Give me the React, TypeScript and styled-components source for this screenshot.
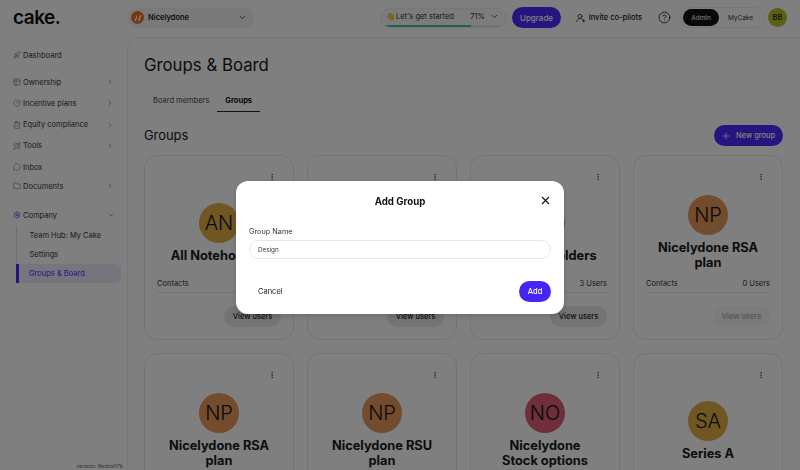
import styled, { createGlobalStyle } from "styled-components";
import {
  Rocket,
  Table2,
  ChartPie,
  ClipboardList,
  PencilRuler,
  MessageCircle,
  Folder,
  Settings,
  ChevronRight,
  ChevronDown,
  EllipsisVertical,
  Plus,
  X,
  UserRoundPlus,
  CircleHelp,
} from "lucide-react";

const navTop = [
  { label: "Ownership", icon: Table2 },
  { label: "Incentive plans", icon: ChartPie },
  { label: "Equity compliance", icon: ClipboardList },
  { label: "Tools", icon: PencilRuler },
];

const groups = [
  { initials: "AN", color: "#e0ae44", name: "All Noteholders", users: 3 },
  { initials: "AN", color: "#e0ae44", name: "All Optionholders", users: 3 },
  { initials: "AS", color: "#e6985a", name: "All Shareholders", users: 3 },
  { initials: "NP", color: "#e6985a", name: "Nicelydone RSA plan", users: 0 },
  { initials: "NP", color: "#e6985a", name: "Nicelydone RSA plan", users: 0 },
  { initials: "NP", color: "#e6985a", name: "Nicelydone RSU plan", users: 0 },
  { initials: "NO", color: "#dc5c76", name: "Nicelydone Stock options", users: 0 },
  { initials: "SA", color: "#e0ae44", name: "Series A", users: 0 },
];

const App = () => {
  return (
    <Page>
      <GlobalStyle />
      <Header>
        <Logo>cake.</Logo>
        <OrgSelect>
          <OrgBadge>
            <svg width="10" height="10" viewBox="0 0 10 10">
              <path d="M1.5 8 L3.5 2.5 L4.5 2.5 L3 8 Z M5 8 L7 2 L8.5 2 L6.5 8 Z" fill="#fff" />
            </svg>
          </OrgBadge>
          <OrgName>Nicelydone</OrgName>
          <ChevronDown size={9} strokeWidth={2} color="#222" />
        </OrgSelect>
        <Progress>
          <Wave>👋</Wave>
          <ProgressLabel>Let's get started</ProgressLabel>
          <ProgressValue>71%</ProgressValue>
          <ChevronDown size={9} strokeWidth={2} color="#222" />
          <ProgressTrack>
            <ProgressFill />
          </ProgressTrack>
        </Progress>
        <Upgrade>Upgrade</Upgrade>
        <Invite>
          <UserRoundPlus size={10} strokeWidth={1.8} />
          Invite co-pilots
        </Invite>
        <HelpSlot>
          <CircleHelp size={13} strokeWidth={1.5} />
        </HelpSlot>
        <Switcher>
          <SwitchOption $active>Admin</SwitchOption>
          <SwitchOption>MyCake</SwitchOption>
        </Switcher>
        <UserAvatar>BB</UserAvatar>
      </Header>
      <Body>
        <Sidebar>
          <NavItem>
            <Rocket size={8} strokeWidth={1.5} />
            <NavLabel>Dashboard</NavLabel>
          </NavItem>
          <NavGroup>
            {navTop.map((item) => (
              <NavItem key={item.label}>
                <item.icon size={8} strokeWidth={1.5} />
                <NavLabel>{item.label}</NavLabel>
                <ChevronRight size={8} strokeWidth={1.6} />
              </NavItem>
            ))}
            <NavItem>
              <MessageCircle size={8} strokeWidth={1.5} />
              <NavLabel>Inbox</NavLabel>
            </NavItem>
            <DocumentsItem>
              <Folder size={8} strokeWidth={1.5} />
              <NavLabel>Documents</NavLabel>
              <ChevronRight size={8} strokeWidth={1.6} />
            </DocumentsItem>
          </NavGroup>
          <CompanyItem>
            <Settings size={8} strokeWidth={1.8} color="#4a2be0" />
            <NavLabel>Company</NavLabel>
            <ChevronDown size={8} strokeWidth={1.6} />
          </CompanyItem>
          <SubNav>
            <SubItem>Team Hub: My Cake</SubItem>
            <SubItem>Settings</SubItem>
            <SubItem $active>Groups &amp; Board</SubItem>
          </SubNav>
          <Version>version: 9edce07b</Version>
        </Sidebar>
        <Main>
          <Title>Groups &amp; Board</Title>
          <Tabs>
            <Tab>Board members</Tab>
            <Tab $active>Groups</Tab>
          </Tabs>
          <SectionHead>
            <SectionTitle>Groups</SectionTitle>
            <NewGroup>
              <Plus size={10} strokeWidth={1.8} />
              New group
            </NewGroup>
          </SectionHead>
          <CardGrid>
            {groups.map((group, i) => (
              <Card key={i}>
                <CardMenu>
                  <EllipsisVertical size={8} strokeWidth={2} />
                </CardMenu>
                <CardBody>
                  <Avatar $color={group.color}>{group.initials}</Avatar>
                  <CardName>{group.name}</CardName>
                </CardBody>
                <CardRow>
                  <span>Contacts</span>
                  <span>{group.users} Users</span>
                </CardRow>
                <ViewUsers $muted={group.users === 0}>View users</ViewUsers>
              </Card>
            ))}
          </CardGrid>
        </Main>
      </Body>
      <Overlay>
        <Modal>
          <ModalHead>
            <ModalTitle>Add Group</ModalTitle>
            <CloseButton>
              <X size={13} strokeWidth={2} />
            </CloseButton>
          </ModalHead>
          <FieldLabel>Group Name</FieldLabel>
          <FieldInput>Design</FieldInput>
          <ModalFoot>
            <CancelButton>Cancel</CancelButton>
            <AddButton>Add</AddButton>
          </ModalFoot>
        </Modal>
      </Overlay>
    </Page>
  );
};

const GlobalStyle = createGlobalStyle`
  html, body {
    margin: 0;
    padding: 0;
    background: #fff;
    font-family: Inter, "Liberation Sans", sans-serif;
    overflow: hidden;
  }
  * {
    box-sizing: border-box;
  }
`;

const Page = styled.div`
  width: 800px;
  height: 470px;
  overflow: hidden;
  display: flex;
  flex-direction: column;
  background: #fff;
  color: #1a1a1a;
`;

const Header = styled.header`
  height: 37px;
  flex: none;
  display: flex;
  align-items: center;
  padding: 0 0 2px 13px;
  white-space: nowrap;
  > * {
    flex-shrink: 0;
  }
`;

const Logo = styled.div`
  width: 114px;
  font-size: 19px;
  font-weight: 600;
  letter-spacing: -0.5px;
  color: #111;
`;

const OrgSelect = styled.div`
  width: 127px;
  height: 20px;
  border-radius: 10px;
  background: #f3f3f3;
  display: flex;
  align-items: center;
  padding: 0 7px 0 4px;
`;

const OrgBadge = styled.div`
  width: 13px;
  height: 13px;
  border-radius: 50%;
  background: #f26a1b;
  display: flex;
  align-items: center;
  justify-content: center;
`;

const OrgName = styled.span`
  flex: 1;
  margin-left: 4px;
  font-size: 7.5px;
  font-weight: 600;
`;

const Progress = styled.div`
  position: relative;
  width: 127px;
  height: 20px;
  margin-left: 126px;
  border: 1px solid #eee;
  border-radius: 10px;
  background: #f8f8f8;
  display: flex;
  align-items: center;
  padding: 0 7px 2px 5px;
  font-size: 7.5px;
  overflow: hidden;
`;

const Wave = styled.span`
  font-size: 7.5px;
`;

const ProgressLabel = styled.span`
  flex: 1;
  margin-left: 1px;
  color: #333;
`;

const ProgressValue = styled.span`
  margin-right: 5px;
  color: #333;
`;

const ProgressTrack = styled.div`
  position: absolute;
  left: 4px;
  right: 0;
  bottom: 0;
  height: 2px;
  background: #e2e2e2;
`;

const ProgressFill = styled.div`
  width: 71%;
  height: 100%;
  background: #3ecb84;
`;

const Upgrade = styled.button`
  width: 49px;
  height: 21px;
  margin-left: 5px;
  padding: 0;
  border: 0;
  border-radius: 11px;
  background: #4f2bff;
  color: #fff;
  font: 500 8px Inter, sans-serif;
`;

const Invite = styled.div`
  display: flex;
  align-items: center;
  gap: 3px;
  width: 66px;
  margin-left: 15px;
  font-size: 7.5px;
  font-weight: 500;
`;

const HelpSlot = styled.div`
  display: flex;
  margin-left: 16px;
`;

const Switcher = styled.div`
  display: flex;
  align-items: center;
  width: 85px;
  height: 21px;
  margin-left: 9px;
  padding: 0 2px;
  border: 1px solid #eee;
  border-radius: 11px;
`;

const SwitchOption = styled.div<{ $active?: boolean }>`
  flex: ${(p) => (p.$active ? "none" : 1)};
  width: ${(p) => (p.$active ? "36px" : "auto")};
  height: 17px;
  border-radius: 9px;
  display: flex;
  align-items: center;
  justify-content: center;
  font-size: 6.5px;
  background: ${(p) => (p.$active ? "#111" : "transparent")};
  color: ${(p) => (p.$active ? "#fff" : "#333")};
`;

const UserAvatar = styled.div`
  width: 19px;
  height: 19px;
  margin-left: 3px;
  border-radius: 50%;
  background: #b5c227;
  display: flex;
  align-items: center;
  justify-content: center;
  font-size: 7.5px;
  font-weight: 500;
`;

const Body = styled.div`
  flex: 1;
  min-height: 0;
  display: flex;
`;

const Sidebar = styled.nav`
  position: relative;
  width: 127px;
  flex: none;
  padding: 11px 13px 0 13px;
  font-size: 7.5px;
  color: #333;
`;

const NavItem = styled.div`
  height: 14px;
  display: flex;
  align-items: center;
  gap: 2px;
  margin-bottom: 7.3px;
  svg {
    color: #666;
  }
`;

const NavGroup = styled.div`
  margin-top: 13px;
`;

const DocumentsItem = styled(NavItem)`
  margin-top: -2.4px;
`;

const CompanyItem = styled(NavItem)`
  margin: 15px -1px 0 0;
`;

const NavLabel = styled.span`
  flex: 1;
`;

const SubNav = styled.div`
  margin: 4px -7px 0 3px;
  border-left: 1px solid #ddd;
`;

const SubItem = styled.div<{ $active?: boolean }>`
  height: 19px;
  display: flex;
  align-items: center;
  padding-left: ${(p) => (p.$active ? "10px" : "12.5px")};
  border-radius: ${(p) => (p.$active ? "0 6px 6px 0" : "0")};
  border-left: ${(p) => (p.$active ? "3px solid #4f2bff" : "0")};
  margin-left: ${(p) => (p.$active ? "-1px" : "0")};
  background: ${(p) => (p.$active ? "#ece8fb" : "transparent")};
  color: ${(p) => (p.$active ? "#4f2bff" : "#333")};
`;

const Version = styled.div`
  position: absolute;
  right: 4px;
  bottom: 1px;
  font-size: 5.3px;
  white-space: nowrap;
  color: #666;
`;

const Main = styled.main`
  flex: 1;
  min-width: 0;
  padding: 15px 17px 0 16px;
  border-left: 1px solid #eee;
  border-top: 1px solid #eee;
  border-top-left-radius: 12px;
`;

const Title = styled.h1`
  margin: 0;
  font-size: 16.8px;
  font-weight: 400;
  line-height: 24px;
`;

const Tabs = styled.div`
  display: flex;
  margin-top: 12px;
`;

const Tab = styled.div<{ $active?: boolean }>`
  height: 23px;
  padding: 0 8px 0 ${(p) => (p.$active ? "8px" : "9px")};
  display: flex;
  align-items: center;
  font-size: 7.5px;
  font-weight: ${(p) => (p.$active ? 700 : 400)};
  color: ${(p) => (p.$active ? "#111" : "#444")};
  border-bottom: 1px solid ${(p) => (p.$active ? "#222" : "transparent")};
`;

const SectionHead = styled.div`
  display: flex;
  align-items: center;
  justify-content: space-between;
  margin-top: 11.5px;
  height: 24px;
`;

const SectionTitle = styled.h2`
  margin: 0;
  font-size: 12.9px;
  font-weight: 400;
`;

const NewGroup = styled.button`
  display: flex;
  align-items: center;
  gap: 5px;
  width: 69px;
  height: 21px;
  padding: 0 0 0 7px;
  border: 0;
  border-radius: 11px;
  background: #4f2bff;
  color: #fff;
  white-space: nowrap;
  font: 500 7.5px Inter, sans-serif;
`;

const CardGrid = styled.div`
  display: grid;
  grid-template-columns: repeat(4, 150px);
  grid-auto-rows: 185px;
  gap: 13px;
  margin-top: 7px;
`;

const Card = styled.article`
  position: relative;
  display: flex;
  flex-direction: column;
  align-items: center;
  padding: 35px 12px 0;
  border: 1px solid #e8e8e8;
  border-radius: 13px;
`;

const CardMenu = styled.div`
  position: absolute;
  top: 17px;
  right: 17px;
  display: flex;
  color: #333;
`;

const CardBody = styled.div`
  height: 84px;
  flex: none;
  display: flex;
  flex-direction: column;
  align-items: center;
  justify-content: center;
`;

const Avatar = styled.div<{ $color: string }>`
  width: 40px;
  height: 40px;
  flex: none;
  border-radius: 50%;
  background: ${(p) => p.$color};
  display: flex;
  align-items: center;
  justify-content: center;
  font-size: 20px;
  font-weight: 300;
  color: #111;
`;

const CardName = styled.div`
  max-width: 108px;
  margin-top: 5px;
  text-align: center;
  font-size: 12.8px;
  font-weight: 700;
  line-height: 15px;
`;

const CardRow = styled.div`
  width: 100%;
  height: 18px;
  flex: none;
  display: flex;
  justify-content: space-between;
  align-items: center;
  font-size: 7.5px;
  color: #333;
  border-bottom: 1px solid #e8e8e8;
`;

const ViewUsers = styled.button<{ $muted: boolean }>`
  align-self: flex-end;
  width: 57px;
  height: 21px;
  flex: none;
  margin-top: 13px;
  padding: 0;
  border: 0;
  border-radius: 11px;
  background: ${(p) => (p.$muted ? "#f6f6f6" : "#e8e8e8")};
  color: ${(p) => (p.$muted ? "#aaa" : "#222")};
  font: 500 7.5px Inter, sans-serif;
`;

const Overlay = styled.div`
  position: fixed;
  inset: 0;
  background: rgba(0, 0, 0, 0.5);
  display: flex;
  align-items: flex-start;
  justify-content: center;
  padding-top: 181px;
`;

const Modal = styled.div`
  width: 328px;
  height: 133px;
  padding: 0 13px;
  background: #fff;
  border-radius: 12px;
  box-shadow: 0 2px 6px rgba(0, 0, 0, 0.15);
`;

const ModalHead = styled.div`
  position: relative;
  height: 40px;
  display: flex;
  align-items: center;
  justify-content: center;
`;

const ModalTitle = styled.div`
  font-size: 9.7px;
  font-weight: 700;
  color: #111;
`;

const CloseButton = styled.div`
  position: absolute;
  right: -0.5px;
  top: 13px;
  display: flex;
  color: #111;
`;

const FieldLabel = styled.div`
  margin-top: 6px;
  font-size: 7.3px;
  line-height: 10px;
  color: #333;
`;

const FieldInput = styled.div`
  height: 19px;
  margin-top: 3px;
  padding: 0 8px;
  display: flex;
  align-items: center;
  font-size: 6.3px;
  color: #333;
  border: 1px solid #e6e6e6;
  border-radius: 9px;
`;

const ModalFoot = styled.div`
  display: flex;
  justify-content: space-between;
  align-items: center;
  margin-top: 21.5px;
`;

const CancelButton = styled.div`
  padding-left: 9px;
  font-size: 7.5px;
  color: #222;
`;

const AddButton = styled.button`
  width: 32px;
  height: 21px;
  padding: 0;
  border: 0;
  border-radius: 11px;
  background: #4824f5;
  color: #fff;
  font: 500 7.5px Inter, sans-serif;
`;

export default App;
